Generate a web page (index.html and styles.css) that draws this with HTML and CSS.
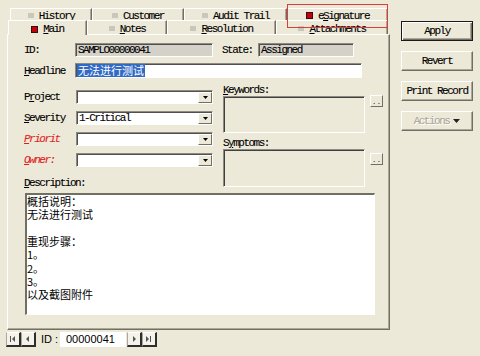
FILE: index.html
```html
<!DOCTYPE html>
<html>
<head>
<meta charset="utf-8">
<title>Record</title>
<link rel="stylesheet" href="styles.css">
</head>
<body>
<div class="app">
  <div class="main-col">
    <div class="tabs">
      <div class="tab-row back">
        <div class="tab w-history"><span class="sq"></span><span><u>H</u>istory</span></div>
        <div class="tab w-customer"><span class="sq"></span><span><u>C</u>ustomer</span></div>
        <div class="tab w-audit"><span class="sq"></span><span>A<u>u</u>dit Trail</span></div>
        <div class="tab w-esig flagged"><span class="sq on"></span><span>e<u>S</u>ignature</span></div>
      </div>
      <div class="tab-row front">
        <div class="tab w-main active"><span class="sq on"></span><span><u>M</u>ain</span></div>
        <div class="tab w-notes"><span class="sq"></span><span><u>N</u>otes</span></div>
        <div class="tab w-res"><span class="sq"></span><span><u>R</u>esolution</span></div>
        <div class="tab w-att"><span class="sq"></span><span><u>A</u>ttachments</span></div>
      </div>
    </div>

    <div class="panel">
      <div class="row row-id">
        <span class="lbl">ID:</span>
        <div class="field ro w-id">SAMPLO00000041</div>
        <span class="lbl lbl-state">State:</span>
        <div class="field ro w-state">Assigned</div>
      </div>
      <div class="row row-head">
        <span class="lbl"><u>H</u>eadline</span>
        <div class="field w-head"><span class="sel cjk">无法进行测试</span></div>
      </div>

      <div class="mid">
        <div class="mid-left">
          <div class="row combo-row">
            <span class="lbl">P<u>r</u>oject</span>
            <div class="combo"><span class="combo-text"></span><span class="drop"><svg width="5" height="3" viewBox="0 0 5 3"><polygon points="0,0 5,0 2.5,3" fill="#000"/></svg></span></div>
          </div>
          <div class="row combo-row">
            <span class="lbl"><u>S</u>everity</span>
            <div class="combo"><span class="combo-text">1-Critical</span><span class="drop"><svg width="5" height="3" viewBox="0 0 5 3"><polygon points="0,0 5,0 2.5,3" fill="#000"/></svg></span></div>
          </div>
          <div class="row combo-row">
            <span class="lbl req"><u>P</u>riorit</span>
            <div class="combo"><span class="combo-text"></span><span class="drop"><svg width="5" height="3" viewBox="0 0 5 3"><polygon points="0,0 5,0 2.5,3" fill="#000"/></svg></span></div>
          </div>
          <div class="row combo-row">
            <span class="lbl req"><u>O</u>wner:</span>
            <div class="combo"><span class="combo-text"></span><span class="drop"><svg width="5" height="3" viewBox="0 0 5 3"><polygon points="0,0 5,0 2.5,3" fill="#000"/></svg></span></div>
          </div>
          <div class="lbl desc-lbl"><u>D</u>escription:</div>
        </div>
        <div class="mid-right">
          <div class="lbl side-lbl"><u>K</u>eywords:</div>
          <div class="list-row">
            <div class="list kw"></div>
            <div class="dots">..</div>
          </div>
          <div class="lbl side-lbl sym-lbl">S<u>y</u>mptoms:</div>
          <div class="list-row">
            <div class="list sym"></div>
            <div class="dots">..</div>
          </div>
        </div>
      </div>

      <div class="desc cjk">
        <div class="dl">概括说明：</div>
        <div class="dl">无法进行测试</div>
        <div class="dl"></div>
        <div class="dl">重现步骤：</div>
        <div class="dl">1。</div>
        <div class="dl">2。</div>
        <div class="dl">3。</div>
        <div class="dl">以及截图附件</div>
      </div>
    </div>

    <div class="nav">
      <div class="nb"><svg width="6" height="6" viewBox="0 0 6 6"><rect x="0" y="0" width="1" height="6" fill="#555"/><polygon points="5,0 5,6 2,3" fill="#555"/></svg></div>
      <div class="nb"><svg width="4" height="6" viewBox="0 0 4 6"><polygon points="3,0 3,6 0,3" fill="#555"/></svg></div>
      <span class="nav-lbl">ID :</span>
      <div class="nav-id">00000041</div>
      <div class="nb"><svg width="4" height="6" viewBox="0 0 4 6"><polygon points="1,0 1,6 4,3" fill="#555"/></svg></div>
      <div class="nb"><svg width="6" height="6" viewBox="0 0 6 6"><polygon points="0,0 0,6 3,3" fill="#555"/><rect x="4" y="0" width="1" height="6" fill="#555"/></svg></div>
    </div>
  </div>

  <div class="side">
    <div class="btn default">Apply</div>
    <div class="btn">Revert</div>
    <div class="btn">Print Record</div>
    <div class="btn disabled">Actions <svg width="7" height="4" viewBox="0 0 7 4"><polygon points="0,0 7,0 3.5,4" fill="#222"/></svg></div>
  </div>
</div>
</body>
</html>
```

FILE: styles.css
```css
* { box-sizing: border-box; }
html, body { margin: 0; padding: 0; }
body {
  width: 480px;
  height: 356px;
  overflow: hidden;
  background: #ECE9D8;
  color: #000;
  font-family: "Liberation Mono", "DejaVu Sans Mono", monospace;
  font-size: 11px;
  letter-spacing: -1.5px;
  -webkit-text-stroke: 0.1px #000;
}
u { text-decoration: underline; text-underline-offset: 1px; }
.cjk { font-family: "Noto Sans CJK SC", "Noto Sans", sans-serif; letter-spacing: 0; -webkit-text-stroke: 0; }

.app { display: flex; }
.main-col { width: 390px; padding-top: 8px; }

/* tabs */
.tab-row { display: flex; }
.tab-row.back { margin-left: 10px; height: 12px; }
.tab-row.front { margin-left: 8px; height: 14px; }
.tab {
  display: flex;
  align-items: center;
  justify-content: center;
  gap: 5px;
  white-space: nowrap;
  line-height: 10px;
  border-top: 1px solid #fff;
  border-left: 1px solid #fff;
  border-right: 1px solid #716F64;
  box-shadow: inset -1px 0 #ACA899;
  background: #ECE9D8;
}
.back .tab { padding-top: 2px; }
.front .tab { padding-top: 2px; }
.w-history { width: 82px; }
.w-customer { width: 92px; }
.w-audit { width: 103px; }
.w-esig { width: 101px; }
.w-main { width: 79px; }
.w-notes { width: 80px; }
.w-res { width: 109px; }
.w-att { width: 112px; }
.tab.active { height: 15px; margin-bottom: -1px; position: relative; z-index: 1; }
.flagged { position: relative; }
.flagged::after {
  content: "";
  position: absolute;
  left: -1px;
  right: -1px;
  top: -5px;
  height: 22px;
  border: 1px solid #DC3C3C;
  z-index: 3;
}
.sq { width: 6px; height: 5px; background: #C9C6BB; flex: none; }
.sq.on { width: 7px; height: 7px; background: #C4000A; border: 1px solid #301010; }

/* panel */
.panel {
  margin-left: 7px;
  width: 383px;
  height: 296px;
  padding: 8px 0 0 16px;
  border-top: 1px solid #fff;
  border-left: 1px solid #fff;
  border-right: 1px solid #716F64;
  border-bottom: 1px solid #716F64;
  box-shadow: inset -1px -1px #ACA899;
}
.row { display: flex; align-items: center; }
.row-id { height: 14px; }
.row-head { height: 15px; margin-top: 6px; }
.lbl { width: 51px; flex: none; white-space: nowrap; line-height: 12px; }
.lbl-state { width: 36px; margin-left: 9px; }
.req { color: #E01E1E; font-style: italic; -webkit-text-stroke: 0.1px #E01E1E; }

.field {
  height: 100%;
  display: flex;
  align-items: center;
  padding-left: 1px;
  border-top: 1px solid #8E8C82;
  border-left: 1px solid #8E8C82;
  border-right: 1px solid #fff;
  border-bottom: 1px solid #fff;
  box-shadow: inset 1px 1px #505050;
  background: #fff;
  white-space: nowrap;
  overflow: hidden;
}
.field.ro { background: #D4D1C9; padding-left: 2px; }
.w-id { width: 138px; }
.w-state { width: 96px; }
.w-head { width: 287px; }
.sel { background: #316AC5; color: #fff; font-size: 11px; line-height: 13px; padding: 0 1px; }

.mid { display: flex; }
.mid-left { width: 189px; padding-top: 12px; }
.combo-row { height: 14px; margin-bottom: 7px; }
.combo-row:nth-child(4) { margin-bottom: 0; }
.combo {
  width: 137px;
  height: 14px;
  margin-left: 1px;
  display: flex;
  border-top: 1px solid #8E8C82;
  border-left: 1px solid #8E8C82;
  border-right: 1px solid #fff;
  border-bottom: 1px solid #fff;
  box-shadow: inset 1px 1px #505050;
  background: #fff;
}
.combo-text { flex: 1; padding-left: 2px; line-height: 12px; white-space: nowrap; }
.drop {
  width: 14px;
  margin: 1px 0 0 0;
  display: flex;
  align-items: center;
  justify-content: center;
  background: #ECE9D8;
  border-top: 1px solid #fff;
  border-left: 1px solid #fff;
  border-right: 1px solid #716F64;
  border-bottom: 1px solid #716F64;
}
.desc-lbl { margin-top: 10px; }

.mid-right { margin-left: 9px; padding-top: 6px; width: 161px; }
.side-lbl { width: auto; padding-left: 1px; }
.sym-lbl { margin-top: 4px; }
.list-row { display: flex; align-items: flex-start; gap: 5px; }
.list {
  width: 142px;
  margin-left: 1px;
  border-top: 1px solid #8E8C82;
  border-left: 1px solid #8E8C82;
  border-right: 1px solid #fff;
  border-bottom: 1px solid #fff;
  box-shadow: inset 1px 1px #404040;
  background: #ECE9D8;
}
.kw { height: 37px; }
.sym { height: 38px; }
.dots {
  width: 13px;
  height: 12px;
  margin-top: -1px;
  font-size: 8px;
  line-height: 12px;
  letter-spacing: 0;
  text-align: center;
  color: #333;
  -webkit-text-stroke: 0;
  background: #ECE9D8;
  border-top: 1px solid #fff;
  border-left: 1px solid #fff;
  border-right: 1px solid #716F64;
  border-bottom: 1px solid #716F64;
}
.sym-lbl + .list-row .dots { margin-top: 4px; }

.desc {
  margin-top: 4px;
  margin-left: 1px;
  width: 350px;
  height: 122px;
  overflow: hidden;
  font-size: 11px;
  padding: 0;
  border-top: 2px solid #716F64;
  border-left: 2px solid #716F64;
  border-right: 1px solid #fff;
  border-bottom: 1px solid #fff;
  background: #fff;
}
.dl { height: 13.33px; line-height: 13.33px; white-space: nowrap; }

/* nav */
.nav {
  margin-top: 2px;
  height: 15px;
  display: flex;
  align-items: stretch;
  padding-left: 6px;
}
.nb {
  width: 15px;
  display: flex;
  align-items: center;
  justify-content: center;
  background: #F4F2EA;
  border-left: 1px solid #ACA899;
  border-top: 1px solid #fff;
  border-right: 2px solid #2E2E2E;
  border-bottom: 2px solid #2E2E2E;
}
.nav-lbl, .nav-id {
  font-family: "Liberation Sans", Arial, sans-serif;
  font-size: 11px;
  letter-spacing: 0;
  -webkit-text-stroke: 0;
  line-height: 15px;
}
.nav-lbl { margin-left: 5px; width: 19px; }
.nav-id { width: 66px; padding-left: 6px; background: #fff; margin-right: 1px; }

/* side buttons */
.side {
  margin-left: 11px;
  padding-top: 21px;
  width: 72px;
  display: flex;
  flex-direction: column;
  gap: 10px;
}
.btn {
  height: 20px;
  display: flex;
  align-items: center;
  justify-content: center;
  gap: 4px;
  white-space: nowrap;
  background: #ECE9D8;
  border-top: 1px solid #fff;
  border-left: 1px solid #fff;
  border-right: 1px solid #716F64;
  border-bottom: 1px solid #716F64;
  box-shadow: inset -1px -1px #ACA899;
}
.btn.default {
  border: 1px solid #1A1A1A;
  box-shadow: inset 1px 1px #fff, inset -1px -1px #716F64, inset -2px -2px #ACA899;
}
.btn.disabled { color: #ACA899; -webkit-text-stroke: 0.1px #ACA899; text-shadow: 1px 1px 0 #fff; }
```
